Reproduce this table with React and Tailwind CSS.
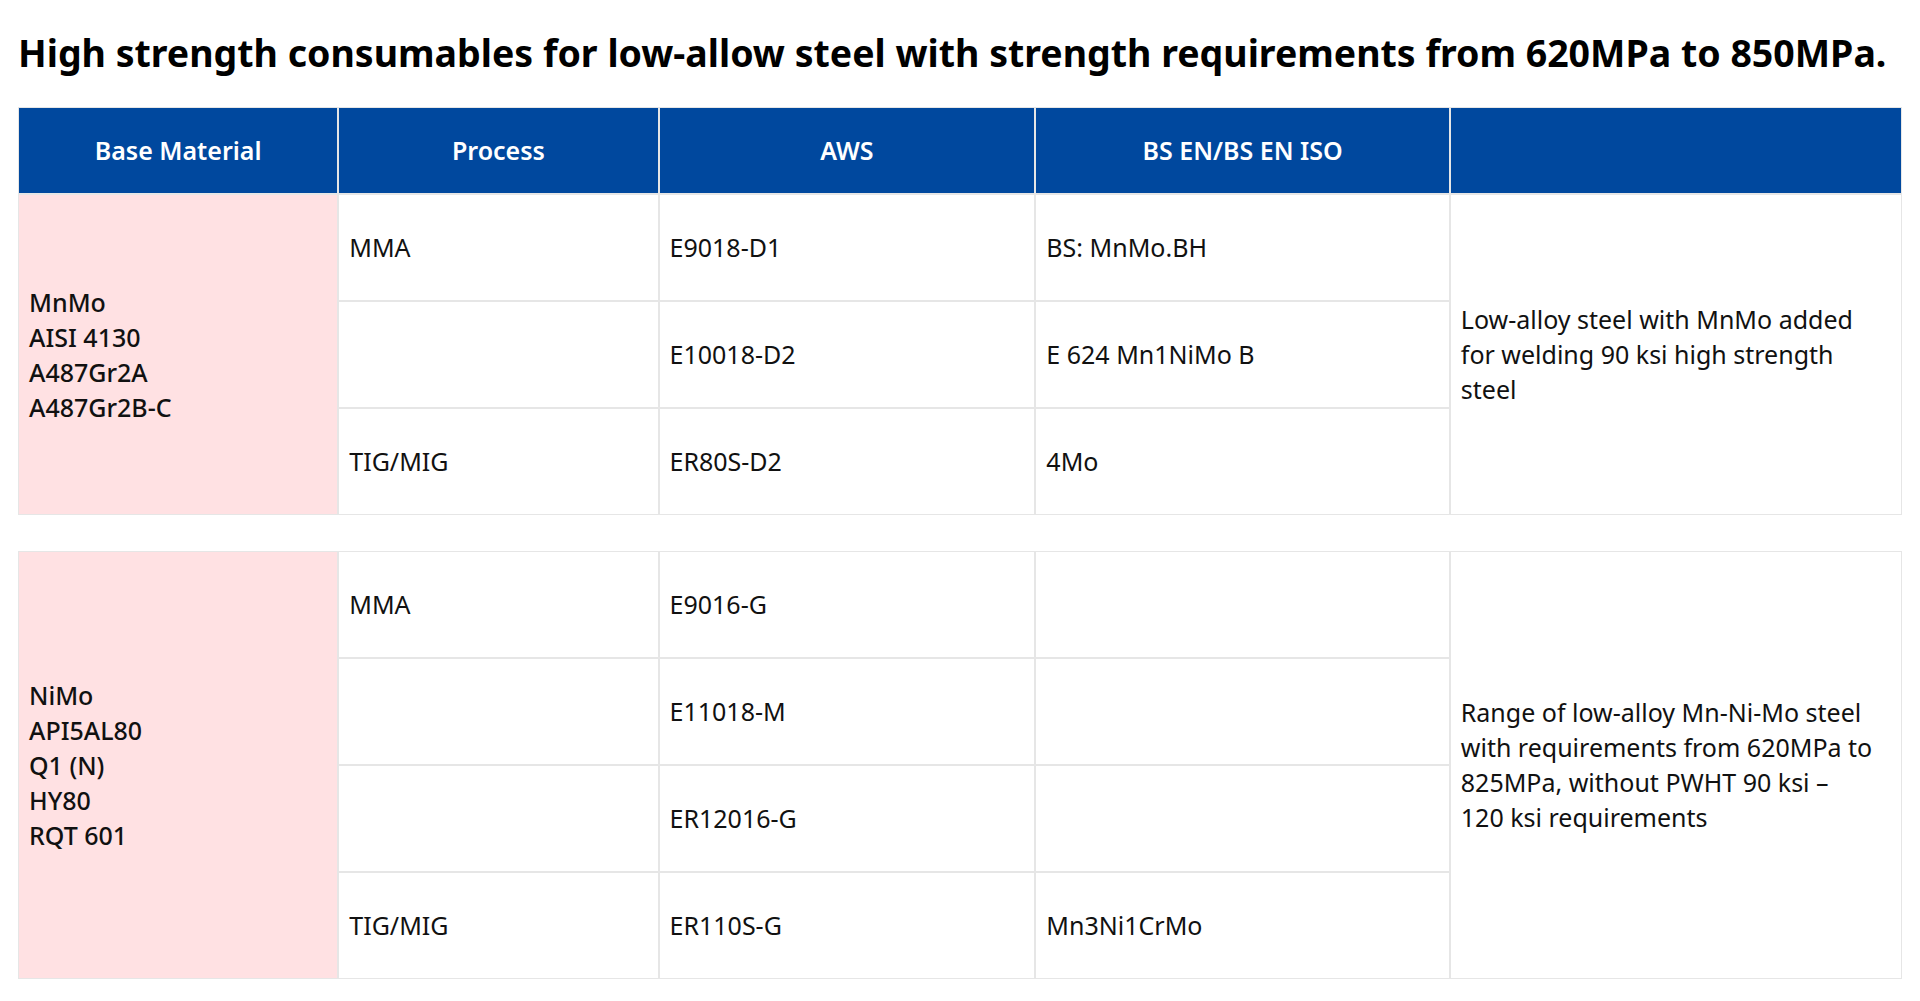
import React from "react";

const td = "border border-[#e6e6e6] px-[10px] align-middle text-left";

function Header() {
  return (
    <thead>
      <tr className="h-[87px]">
        {["Base Material", "Process", "AWS", "BS EN/BS EN ISO", ""].map((h, i) => (
          <th key={i} className="border border-[#e6e6e6] bg-[#00489e] text-white font-semibold text-center px-[10px]">
            {h}
          </th>
        ))}
      </tr>
    </thead>
  );
}

function Cols() {
  return (
    <colgroup>
      <col className="w-[17%]" />
      <col className="w-[17%]" />
      <col className="w-[20%]" />
      <col className="w-[22%]" />
      <col className="w-[24%]" />
    </colgroup>
  );
}

function Block({ base, desc, rows, header }) {
  return (
    <table className="w-full table-fixed border-separate border-spacing-0 text-[25px] leading-[35px] text-[#111]">
      <Cols />
      {header && <Header />}
      <tbody>
        {rows.map((r, i) => (
          <tr key={i} className="h-[107px]">
            {i === 0 && (
              <td rowSpan={rows.length} className={td + " bg-[#ffe1e3] font-medium"}>
                {base.map((b) => (
                  <div key={b}>{b}</div>
                ))}
              </td>
            )}
            <td className={td}>{r[0]}</td>
            <td className={td}>{r[1]}</td>
            <td className={td}>{r[2]}</td>
            {i === 0 && (
              <td rowSpan={rows.length} className={td}>
                {desc}
              </td>
            )}
          </tr>
        ))}
      </tbody>
    </table>
  );
}

export default function App() {
  return (
    <div className="min-h-screen bg-white px-[18px] pt-[30px]" style={{ fontFamily: "'Noto Sans', 'Open Sans', sans-serif" }}>
      <h2 className="text-[37.5px] leading-[46px] font-bold text-black mb-[31px] whitespace-nowrap">
        High strength consumables for low-allow steel with strength requirements from 620MPa to 850MPa.
      </h2>
      <Block
        header
        base={["MnMo", "AISI 4130", "A487Gr2A", "A487Gr2B-C"]}
        desc="Low-alloy steel with MnMo added for welding 90 ksi high strength steel"
        rows={[
          ["MMA", "E9018-D1", "BS: MnMo.BH"],
          ["", "E10018-D2", "E 624 Mn1NiMo B"],
          ["TIG/MIG", "ER80S-D2", "4Mo"],
        ]}
      />
      <div className="h-[36px]" />
      <Block
        base={["NiMo", "API5AL80", "Q1 (N)", "HY80", "RQT 601"]}
        desc={"Range of low-alloy Mn-Ni-Mo steel with requirements from 620MPa to 825MPa, without PWHT 90 ksi – 120\u00a0ksi requirements"}
        rows={[
          ["MMA", "E9016-G", ""],
          ["", "E11018-M", ""],
          ["", "ER12016-G", ""],
          ["TIG/MIG", "ER110S-G", "Mn3Ni1CrMo"],
        ]}
      />
    </div>
  );
}
